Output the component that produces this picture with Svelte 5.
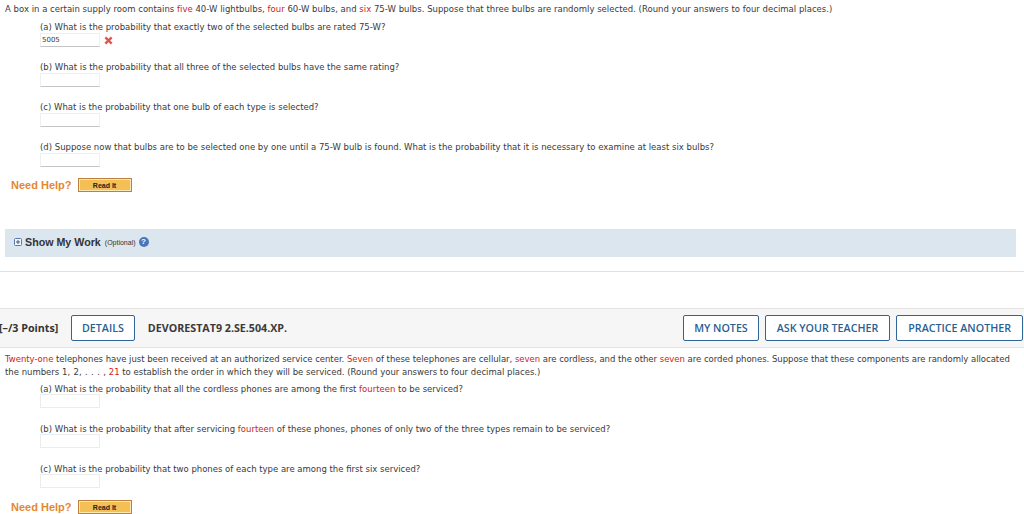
<script lang="ts">
/**
 * Homework question page: two probability questions with answer boxes.
 */
type Part = { label: string; value?: string; wrong?: boolean };

const firstParts: Part[] = [
  { label: '(a) What is the probability that exactly two of the selected bulbs are rated 75-W?', value: '5005', wrong: true },
  { label: '(b) What is the probability that all three of the selected bulbs have the same rating?' },
  { label: '(c) What is the probability that one bulb of each type is selected?' },
  { label: '(d) Suppose now that bulbs are to be selected one by one until a 75-W bulb is found. What is the probability that it is necessary to examine at least six bulbs?' }
];
</script>

{#snippet help()}
  <div class="help">
    <span class="need">Need Help?</span>
    <button class="read"><span>Read It</span></button>
  </div>
{/snippet}

<div class="page">
  <section class="question first">
    <p class="stem">A box in a certain supply room contains <em>five</em> 40-W lightbulbs, <em>four</em> 60-W bulbs, and <em>six</em> 75-W bulbs. Suppose that three bulbs are randomly selected. (Round your answers to four decimal places.)</p>
    {#each firstParts as part}
      <div class="part">
        <p>{part.label}</p>
        <div class="answer">
          <div class="box">{part.value ?? ''}</div>
          {#if part.wrong}
            <svg class="cross" width="9" height="9" viewBox="0 0 10 10" aria-label="Incorrect">
              <path d="M1.5 1.5 8.5 8.5M8.5 1.5 1.5 8.5" stroke="#e0564f" stroke-width="2.6" />
            </svg>
          {/if}
        </div>
      </div>
    {/each}
  </section>

  {@render help()}

  <div class="work">
    <svg width="8" height="8" viewBox="0 0 8 8">
      <rect x="0.5" y="0.5" width="7" height="7" rx="1" fill="#f2f5fa" stroke="#5b78a8" />
      <path d="M2 4h4M4 2v4" stroke="#3d5a8c" />
    </svg>
    <strong>Show My Work</strong>
    <small>(Optional)</small>
    <span class="info">?</span>
  </div>

  <hr />

  <header class="bar">
    <span class="points">[–/3 Points]</span>
    <button class="action details">DETAILS</button>
    <span class="code">DEVORESTAT9 2.SE.504.XP.</span>
    <div class="actions">
      <button class="action notes">MY NOTES</button>
      <button class="action">ASK YOUR TEACHER</button>
      <button class="action">PRACTICE ANOTHER</button>
    </div>
  </header>

  <section class="question second">
    <p class="stem"><span class="tight"><em>Twenty-one</em> telephones have just been received at an authorized service center. <em>Seven</em> of these telephones are cellular, <em>seven</em> are cordless, and the other <em>seven</em> are corded phones. Suppose that these components are randomly allocated</span><br />the numbers <span class="spaced">1, 2, . . . ,</span> <em>21</em> to establish the order in which they will be serviced. (Round your answers to four decimal places.)</p>
    <div class="part">
      <p>(a) What is the probability that all the cordless phones are among the first <em>fourteen</em> to be serviced?</p>
      <div class="answer"><div class="box soft"></div></div>
    </div>
    <div class="part">
      <p>(b) What is the probability that after servicing <em>fourteen</em> of these phones, phones of only two of the three types remain to be serviced?</p>
      <div class="answer"><div class="box soft"></div></div>
    </div>
    <div class="part">
      <p>(c) What is the probability that two phones of each type are among the first six serviced?</p>
      <div class="answer"><div class="box soft"></div></div>
    </div>
  </section>

  {@render help()}
</div>

<style>
  :global(body) {
    margin: 0;
    background: #fff;
  }

  .page {
    height: 514px;
    overflow: hidden;
    font-family: "DejaVu Sans", Verdana, sans-serif;
    font-size: 8.5px;
    line-height: 13px;
    color: #3a3a3a;
  }

  p {
    margin: 0;
  }

  em {
    font-style: normal;
    color: #cc2418;
  }

  .question.first {
    padding: 3px 0 0 5px;
  }

  .first .stem {
    letter-spacing: 0.015px;
  }

  .tight {
    letter-spacing: -0.025px;
  }

  .spaced {
    word-spacing: 0.7px;
  }

  .part {
    margin-left: 35px;
    margin-top: 5px;
    height: 35px;
  }

  .answer {
    display: flex;
    align-items: center;
    gap: 4px;
    margin-top: -1px;
  }

  .box {
    width: 60px;
    height: 14px;
    box-sizing: border-box;
    border: 1px solid #efefef;
    border-bottom: 1px solid #c4c4c4;
    font-size: 7px;
    line-height: 12px;
    padding-left: 1px;
  }

  .box.soft {
    border-color: #ececec;
  }

  .help {
    display: flex;
    align-items: center;
    gap: 6px;
    padding-left: 11px;
    height: 16px;
  }

  .first + .help {
    margin-top: 1px;
  }

  .need {
    font-family: "Liberation Sans", Arial, sans-serif;
    font-size: 11px;
    font-weight: 700;
    color: #e5872f;
  }

  .read {
    width: 54px;
    height: 14px;
    padding: 1px;
    border: 1px solid #bd8040;
    background: #fbe6b8;
    font-family: "Liberation Sans", Arial, sans-serif;
    font-size: 7px;
    font-weight: 700;
    color: #222;
  }

  .read span {
    display: block;
    height: 10px;
    line-height: 11px;
    background: #f4bf55;
  }

  .work {
    display: flex;
    align-items: center;
    gap: 3px;
    height: 28px;
    margin: 36px 8px 0 5px;
    padding: 0 0 2px 9px;
    box-sizing: border-box;
    background: #dce6ef;
    font-family: "Liberation Sans", Arial, sans-serif;
  }

  .work strong {
    font-size: 10.7px;
    color: #333;
  }

  .work small {
    font-size: 7px;
    color: #333;
    margin-left: 1px;
  }

  .info {
    width: 10px;
    height: 10px;
    border-radius: 50%;
    background: #4a76b8;
    color: #fff;
    font-size: 8px;
    font-weight: 700;
    line-height: 10px;
    text-align: center;
  }

  hr {
    margin: 14px 0 0;
    border: 0;
    border-top: 1px solid #e2e2e2;
  }

  .bar {
    display: flex;
    align-items: center;
    height: 38px;
    margin-top: 36px;
    background: #f6f6f6;
    border-top: 1px solid #e2e2e2;
    border-bottom: 1px solid #e2e2e2;
    font-family: "Open Sans", sans-serif;
    font-size: 10.7px;
    font-weight: 600;
  }

  .points {
    width: 72px;
    margin-left: -1px;
    color: #333;
    font-weight: 700;
    white-space: nowrap;
  }

  .code {
    margin-left: 13px;
    color: #3a3a3a;
    font-weight: 700;
  }

  .actions {
    display: flex;
    gap: 6px;
    margin-left: auto;
    margin-right: 1px;
  }

  .action {
    height: 26px;
    padding: 0 11px;
    border: 1px solid #2f6598;
    border-radius: 2px;
    background: #fff;
    color: #2a5f91;
    font-family: "Open Sans", sans-serif;
    font-size: 10.7px;
    font-weight: 600;
    white-space: nowrap;
  }

  .action.details {
    padding: 0 10px;
  }

  .action.notes {
    padding: 0 10px;
  }

  .question.second {
    padding: 5px 0 0 5px;
  }

  .question.second .part {
    margin-top: 4px;
    height: 36px;
  }

  .second .answer {
    margin-top: -2px;
  }
</style>
